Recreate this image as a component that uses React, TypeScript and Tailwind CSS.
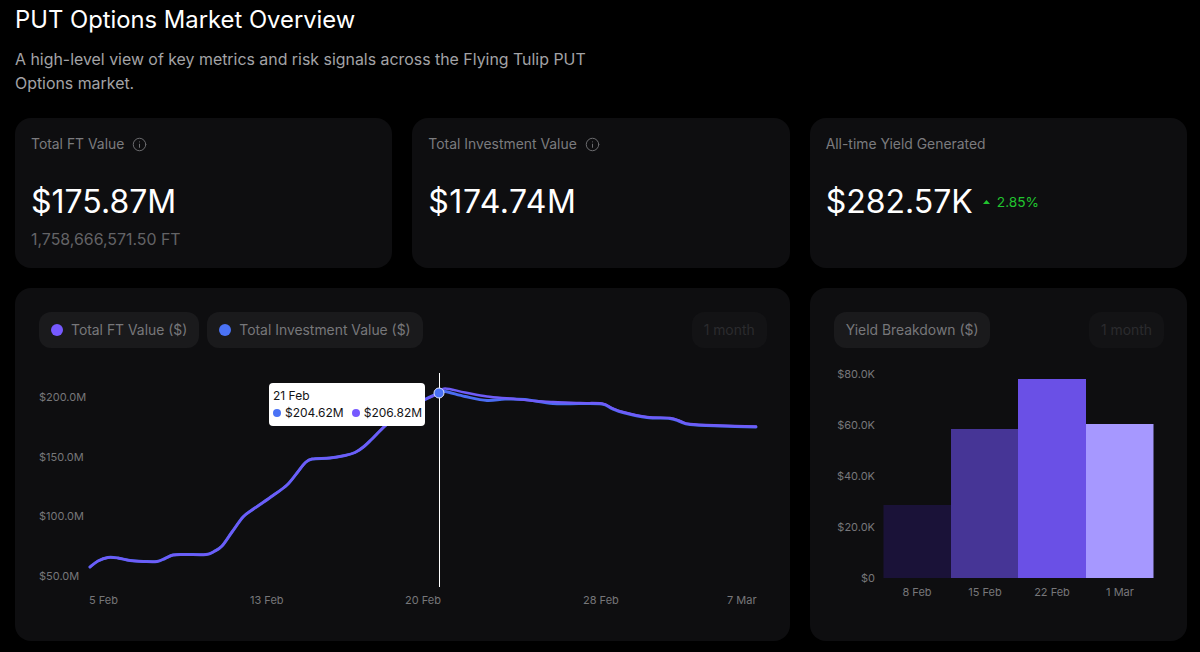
import React from "react";

type P = [number, number];

function smooth(pts: P[]): string {
  let d = `M${pts[0][0]} ${pts[0][1]}`;
  for (let i = 0; i < pts.length - 1; i++) {
    const p0 = pts[Math.max(i - 1, 0)];
    const p1 = pts[i];
    const p2 = pts[i + 1];
    const p3 = pts[Math.min(i + 2, pts.length - 1)];
    const c1x = p1[0] + (p2[0] - p0[0]) / 6;
    const c1y = p1[1] + (p2[1] - p0[1]) / 6;
    const c2x = p2[0] - (p3[0] - p1[0]) / 6;
    const c2y = p2[1] - (p3[1] - p1[1]) / 6;
    d += ` C${c1x.toFixed(1)} ${c1y.toFixed(1)} ${c2x.toFixed(1)} ${c2y.toFixed(1)} ${p2[0]} ${p2[1]}`;
  }
  return d;
}

const rise: P[] = [
  [90, 567], [98, 561], [108, 557.5], [118, 558], [130, 560.5], [145, 561.5], [157, 561.5], [165, 558.5], [173, 555],
  [185, 554.5], [206, 554.5], [214, 551.5], [222, 546], [232, 532], [243, 517], [252, 510], [260, 504.5], [273, 495.5], [287, 485],
  [297, 473], [305, 463], [312, 459], [330, 458], [345, 455.5], [355, 452.5], [364, 446.5], [372, 439], [385, 426],
  [400, 414], [420, 402], [439, 393],
];
const ftLine: P[] = [
  ...rise, [445, 388.5], [465, 392.5], [487, 396.5], [510, 398.5], [535, 401], [553, 402], [580, 403], [602, 403.5],
  [612, 408], [623, 412], [647, 417], [670, 418], [680, 421], [690, 424], [720, 425.5], [756, 426.5],
];
const invLine: P[] = [
  ...rise, [445, 391.5], [465, 396.5], [487, 400.5], [505, 399], [525, 399.5], [553, 403.5], [580, 403.5], [602, 404],
  [612, 408.5], [623, 412.5], [647, 417.5], [670, 418.5], [680, 421.5], [690, 424.5], [720, 426], [756, 427],
];

const fontStyle = { fontFamily: "Inter, 'Noto Sans', sans-serif" };

function Info() {
  return (
    <svg width="15" height="15" viewBox="0 0 24 24" fill="none" stroke="#6b6b6e" strokeWidth="1.6" strokeLinecap="round">
      <circle cx="12" cy="12" r="10" />
      <path d="M12 16.5v-5" />
      <path d="M12 7.8v.1" />
    </svg>
  );
}

function StatCard({ label, info, value, valueClass, extra, sub }: { label: string; info?: boolean; value: string; valueClass?: string; extra?: React.ReactNode; sub?: string }) {
  return (
    <div className="h-[150px] rounded-2xl bg-[#0e0e10] pl-4 pt-4">
      <div className="flex h-5 items-center gap-2 text-[13.9px] leading-5 text-[#7b7b7e]">
        <span>{label}</span>
        {info && <Info />}
      </div>
      <div className="mt-[28px] flex h-10 items-center gap-[9px] text-[32px] leading-10 text-white">
        <span className={valueClass}>{value}</span>
        {extra}
      </div>
      {sub && <div className="mt-[6px] text-[15.9px] leading-6 text-[#636366]">{sub}</div>}
    </div>
  );
}

function Chip({ color, children }: { color?: string; children: React.ReactNode }) {
  return (
    <div className="flex h-9 items-center gap-2 rounded-xl bg-[#1a1a1c] px-3 text-[13.9px] text-[#77777a]">
      {color && <span className="h-3 w-3 rounded-full" style={{ background: color }} />}
      <span>{children}</span>
    </div>
  );
}

function MonthChip() {
  return <div className="flex h-9 items-center rounded-xl bg-[#131315] px-3 text-[13.9px] text-[#2b2b2e]">1 month</div>;
}

function LineChart() {
  const yLabels: [string, number][] = [["$200.0M", 401], ["$150.0M", 461], ["$100.0M", 520], ["$50.0M", 580]];
  const xLabels: [string, number][] = [["5 Feb", 89], ["13 Feb", 250], ["20 Feb", 405], ["28 Feb", 583], ["7 Mar", 727]];
  return (
    <svg viewBox="15 360 775 260" width="775" height="260" className="block" style={fontStyle}>
      {yLabels.map(([t, y]) => (
        <text key={t} x="39" y={y} fontSize="11" fill="#77777a">{t}</text>
      ))}
      {xLabels.map(([t, x]) => (
        <text key={t} x={x} y="604" fontSize="11" fill="#77777a">{t}</text>
      ))}
      <path d={smooth(invLine)} fill="none" stroke="#4a6cf2" strokeWidth="3" strokeLinecap="round" />
      <path d={smooth(ftLine)} fill="none" stroke="#6f5cf8" strokeWidth="2.4" strokeLinecap="round" />
      <line x1="439.5" y1="373" x2="439.5" y2="587" stroke="#ffffff" strokeWidth="1" />
      <circle cx="439" cy="393" r="5" fill="#4a72f5" stroke="#dfe6ff" strokeWidth="1" />
    </svg>
  );
}

function BarChart() {
  const yLabels: [string, number][] = [["$80.0K", 378], ["$60.0K", 429], ["$40.0K", 480], ["$20.0K", 531], ["$0", 582]];
  const bars: [string, number, number, number, string, number][] = [
    ["#1a1238", 883.5, 505, 67.5, "8 Feb", 917],
    ["#463596", 951, 429, 67, "15 Feb", 985],
    ["#6a50e6", 1018, 379, 68, "22 Feb", 1052],
    ["#a698ff", 1086, 424, 67.5, "1 Mar", 1120],
  ];
  return (
    <svg viewBox="810 360 377 260" width="377" height="260" className="block" style={fontStyle}>
      {yLabels.map(([t, y]) => (
        <text key={t} x="875" y={y} textAnchor="end" fontSize="11" fill="#77777a">{t}</text>
      ))}
      {bars.map(([c, x, top, w, t, cx]) => (
        <g key={t}>
          <rect x={x} y={top} width={w} height={578 - top} fill={c} />
          <text x={cx} y="596" textAnchor="middle" fontSize="11" fill="#77777a">{t}</text>
        </g>
      ))}
    </svg>
  );
}

export default function App() {
  return (
    <div className="h-[652px] w-[1200px] overflow-hidden bg-black pl-[15px] pr-[13px]" style={fontStyle}>
      <h1 className="pt-[4px] text-[23.8px] leading-8 text-white">PUT Options Market Overview</h1>
      <p className="mt-[12px] w-[600px] text-[15.9px] leading-[23.5px] text-[#a3a3a6]">
        A high-level view of key metrics and risk signals across the Flying Tulip PUT Options market.
      </p>
      <div className="mt-[23px] grid grid-cols-3 gap-x-5 gap-y-5">
        <StatCard label="Total FT Value" info value="$175.87M" sub="1,758,666,571.50 FT" />
        <StatCard label="Total Investment Value" info value="$174.74M" valueClass="tracking-[0.5px]" />
        <StatCard
          label="All-time Yield Generated"
          value="$282.57K"
          extra={
            <span className="flex items-center gap-1.5 text-[13.7px] text-[#21c42f]">
              <svg width="9" height="6" viewBox="0 0 9 6" fill="#21c42f"><path d="M4.5 1 8 5H1z" /></svg>
              2.85%
            </span>
          }
        />
        <div className="relative col-span-2 h-[353px] rounded-2xl bg-[#0e0e10] pt-6">
          <div className="flex items-center justify-between pl-6 pr-[23px]">
            <div className="flex gap-2">
              <Chip color="#7659ff">Total FT Value ($)</Chip>
              <Chip color="#4a72f5">Total Investment Value ($)</Chip>
            </div>
            <MonthChip />
          </div>
          <div className="mt-3">
            <LineChart />
          </div>
          <div className="absolute left-[254px] top-[95px] h-[43px] w-[156px] rounded bg-white px-[4px] pt-[5px] text-xs leading-4 text-[#141416]">
            <div>21 Feb</div>
            <div className="mt-[1px] flex items-center whitespace-nowrap">
              <span className="mr-[4px] h-2 w-2 shrink-0 rounded-full bg-[#4a72f5]" />
              <span>$204.62M</span>
              <span className="ml-[8px] mr-[4px] h-2 w-2 shrink-0 rounded-full bg-[#7659ff]" />
              <span>$206.82M</span>
            </div>
          </div>
        </div>
        <div className="h-[353px] rounded-2xl bg-[#0e0e10] pt-6">
          <div className="flex items-center justify-between pl-6 pr-[23px]">
            <Chip>Yield Breakdown ($)</Chip>
            <MonthChip />
          </div>
          <div className="mt-3">
            <BarChart />
          </div>
        </div>
      </div>
    </div>
  );
}
